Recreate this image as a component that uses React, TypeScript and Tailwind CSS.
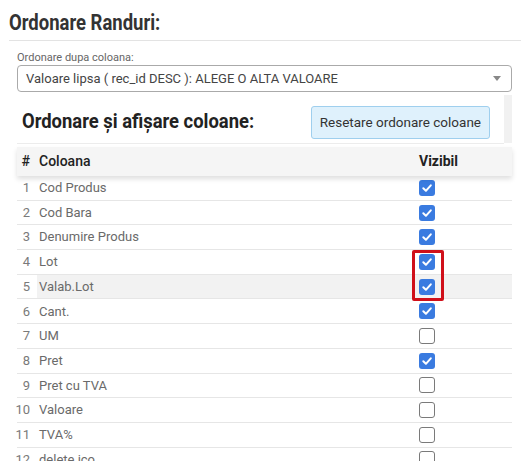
import React from "react";

const rows: { n: number; name: string; on: boolean }[] = [
  { n: 1, name: "Cod Produs", on: true },
  { n: 2, name: "Cod Bara", on: true },
  { n: 3, name: "Denumire Produs", on: true },
  { n: 4, name: "Lot", on: true },
  { n: 5, name: "Valab.Lot", on: true },
  { n: 6, name: "Cant.", on: true },
  { n: 7, name: "UM", on: false },
  { n: 8, name: "Pret", on: true },
  { n: 9, name: "Pret cu TVA", on: false },
  { n: 10, name: "Valoare", on: false },
  { n: 11, name: "TVA%", on: false },
  { n: 12, name: "delete ico", on: false },
];

function Check({ on }: { on: boolean }) {
  if (on) {
    return (
      <div className="w-[16px] h-[16px] rounded-[3px] bg-[#3a7be0] flex items-center justify-center">
        <svg width="12" height="12" viewBox="0 0 12 12">
          <path d="M2.3 6.3 L4.9 8.8 L9.8 3.3" fill="none" stroke="#fff" strokeWidth="2" strokeLinecap="round" strokeLinejoin="round" />
        </svg>
      </div>
    );
  }
  return <div className="w-[16px] h-[16px] rounded-[3px] border border-[#7a7a7a] bg-white" />;
}

export default function App() {
  return (
    <div className="w-[529px] h-[461px] overflow-hidden bg-white" style={{ fontFamily: "Roboto, sans-serif" }}>
      <div className="ml-[9px] mr-[8px] h-[41px] border-b border-[#e3e3e3] pt-[12px]">
        <div className="inline-block origin-left scale-x-[0.84] text-[22px] leading-[22px] font-bold text-[#333] whitespace-nowrap">
          Ordonare Randuri:
        </div>
      </div>
      <div className="mx-[17px]">
        <div className="mt-[10px] h-[14px] text-[11px] leading-[14px] text-[#666]">Ordonare dupa coloana:</div>
        <div className="h-[27px] border border-[#aaa] rounded-[4px] flex items-center pl-[8px] pr-[8px] text-[13px] text-[#444]">
          <span className="flex-1">Valoare lipsa ( rec_id DESC ): ALEGE O ALTA VALOARE</span>
          <svg width="8" height="5" viewBox="0 0 8 5" className="mr-[2px]">
            <path d="M0 0 L8 0 L4 5 Z" fill="#888" />
          </svg>
        </div>
        <div className="mt-[3px] flex h-[49px]">
          <div className="flex-1 flex items-start border-b border-[#ececec]">
            <div className="w-[250px] mt-[16px] ml-[5px]">
              <div className="inline-block origin-left scale-x-[0.92] text-[20px] leading-[20px] font-bold text-[#222] whitespace-nowrap">
                Ordonare și afișare coloane:
              </div>
            </div>
            <button className="ml-auto mr-[14px] mt-[11px] h-[33px] px-[8px] bg-[#dff1fc] border border-[#9fcfee] rounded-[3px] text-[13.5px] text-[#333]">
              Resetare ordonare coloane
            </button>
          </div>
          <div className="w-[8px] h-[48px] bg-[#f1f1f1]" />
        </div>
        <div className="relative mt-[3px]">
          <div className="relative z-10 h-[29px] flex items-center bg-[#f5f5f5] shadow-[0_3px_5px_rgba(0,0,0,0.13)] text-[14px] font-medium text-[#222]">
            <div className="w-[20px] pr-[7px] text-right">#</div>
            <div className="flex-1 pl-[2px]">Coloana</div>
            <div className="w-[93px] font-bold">Vizibil</div>
          </div>
          {rows.map((r) => (
            <div key={r.n} className="relative h-[24.7px] flex border-b border-[#e6e6e6] text-[13px] text-[#6a6a6a]">
              <div className="w-[20px] pr-[7px] text-right flex items-center justify-end text-[#7a7a7a]">{r.n}</div>
              <div className={`flex-1 flex ${r.n === 5 ? "bg-[#f2f2f2]" : ""}`}>
                <div className="flex-1 pl-[2px] flex items-center">{r.name}</div>
                <div className="w-[93px] flex items-center">
                  <Check on={r.on} />
                </div>
              </div>
              {r.n === 4 && (
                <div className="absolute z-20 left-[395px] top-0 w-[32px] h-[51px] border-[3px] border-[#d0101a] rounded-[2px]" />
              )}
            </div>
          ))}
        </div>
      </div>
    </div>
  );
}
